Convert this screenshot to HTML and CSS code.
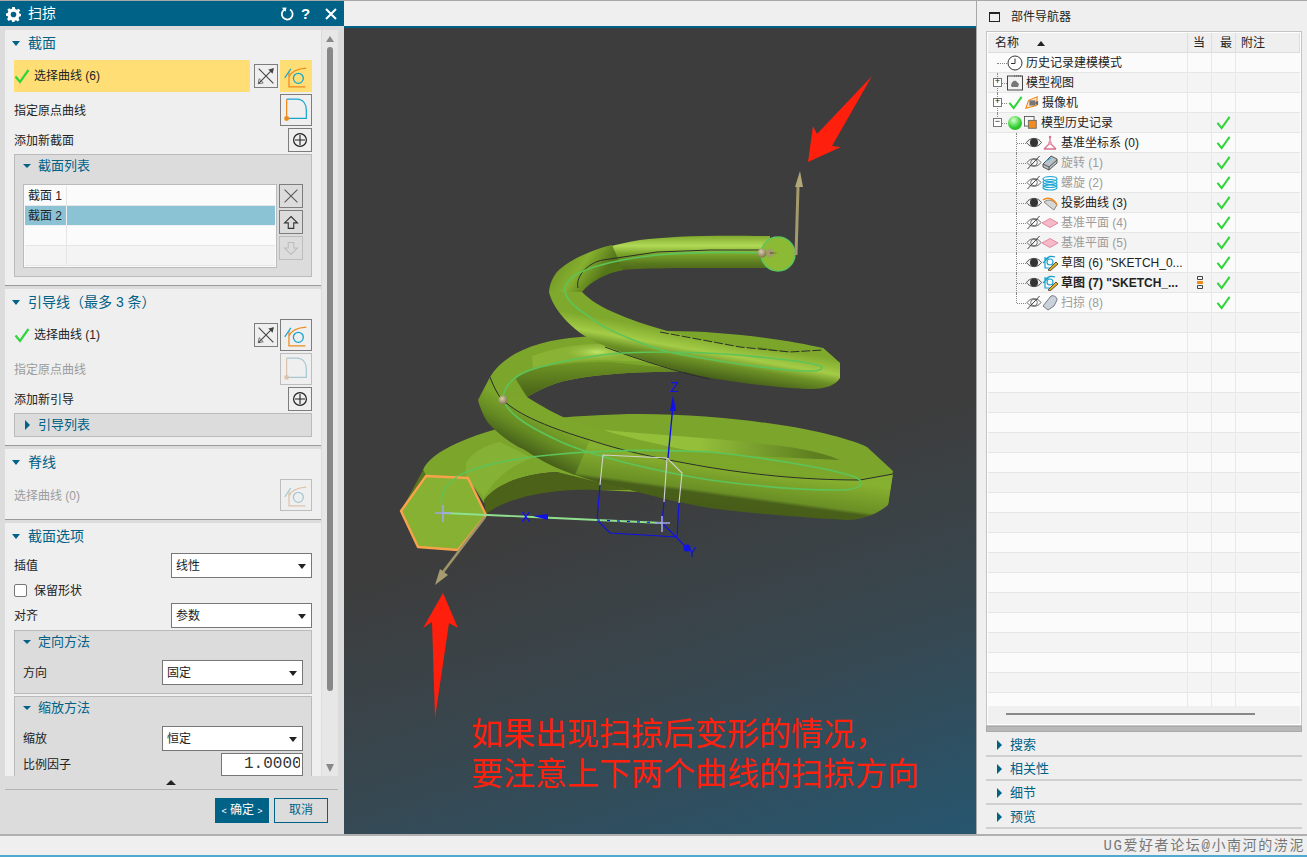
FILE: index.html
```html
<!DOCTYPE html>
<html lang="zh-CN">
<head>
<meta charset="utf-8">
<title>扫掠</title>
<link rel="stylesheet" href="styles.css">
</head>
<body>
<svg class="defs" aria-hidden="true">
  <symbol id="i-check" viewBox="0 0 16 16"><path d="M1.5 8.5 L6 14 L14.5 2" fill="none" stroke="#2fd53a" stroke-width="2.2"/></symbol>
  <symbol id="i-expand" viewBox="0 0 24 24"><path d="M4 4 L20 20 M20 4 L4 20" fill="none" stroke="#444" stroke-width="1.2"/><path d="M20.5 3.5 L14.5 4.8 L19.2 9.5 Z" fill="#444"/><path d="M3.5 20.5 L9 19.4 L4.6 15 Z" fill="none" stroke="#444" stroke-width=".8"/></symbol>
  <symbol id="i-curve" viewBox="0 0 32 32"><path d="M8.5 12 V27.5 H26 M8.5 17 C11 11 18 8 27 7.5" fill="none" stroke="#ee8a1c" stroke-width="1.3"/><path d="M4 18 L10.5 8.5" stroke="#18a6d0" stroke-width="1.3"/><circle cx="18.5" cy="18.5" r="5.3" fill="none" stroke="#18a6d0" stroke-width="1.4"/></symbol>
  <symbol id="i-origin" viewBox="0 0 32 32"><path d="M6 25 V4.5" stroke="#ee8a1c" stroke-width="1.3"/><path d="M6 4.5 H17 C24 4.5 27 10 27 16 V25 H7" fill="none" stroke="#18a6d0" stroke-width="1.3"/><circle cx="6" cy="25" r="2.6" fill="#ee8a1c"/></symbol>
  <symbol id="i-plus" viewBox="0 0 24 24"><circle cx="12" cy="12" r="7" fill="none" stroke="#222" stroke-width="1.3"/><path d="M12 6.5 V17.5 M6.5 12 H17.5" stroke="#222" stroke-width="1.2"/></symbol>
  <symbol id="i-x" viewBox="0 0 24 24"><path d="M5 5 L19 19 M19 5 L5 19" stroke="#555" stroke-width="1.1"/></symbol>
  <symbol id="i-up" viewBox="0 0 24 24"><path d="M12 6 L19 13 H15 V19 H9 V13 H5 Z" fill="none" stroke="#333" stroke-width="1.2"/></symbol>
  <symbol id="i-down" viewBox="0 0 24 24"><path d="M12 19 L19 12 H15 V6 H9 V12 H5 Z" fill="none" stroke="#999" stroke-width="1.2"/></symbol>
  <symbol id="i-clock" viewBox="0 0 16 16"><circle cx="8" cy="8" r="7" fill="#fff" stroke="#333"/><path d="M8 3.5 V8.5 H4" fill="none" stroke="#333"/></symbol>
  <symbol id="i-view" viewBox="0 0 16 16"><rect x=".5" y="1" width="15" height="14" fill="#f2f2f2" stroke="#444"/><path d="M7 1 H15" stroke="#444" stroke-dasharray="1 1"/><path d="M4 11 C4 7 7 5 9 6 L12 9 L11 12 H5 Z" fill="#777"/></symbol>
  <symbol id="i-camera" viewBox="0 0 16 16"><path d="M1 14 L4 5 L14 1 L13 11 Z" fill="#f8e6cf" stroke="#ef8a1d" stroke-width="1.2"/><rect x="5" y="5" width="7" height="6" fill="#777"/><path d="M12 7 L15 5.5 V10.5 L12 9 Z" fill="#666"/></symbol>
  <symbol id="i-hist" viewBox="0 0 16 16"><rect x=".5" y=".5" width="11" height="11" fill="#f6f6f6" stroke="#555"/><rect x="5" y="5" width="9" height="9" fill="#f28c1e" stroke="#666"/></symbol>
  <symbol id="i-csys" viewBox="0 0 16 16"><path d="M8 8 V2 M8 8 L2 14 M8 8 L14 14 M2 14 H14" fill="none" stroke="#d9708c" stroke-width="1.3"/><circle cx="8" cy="8" r="2" fill="#e6a0b2"/><circle cx="8" cy="2" r="1.2" fill="#d9708c"/></symbol>
  <symbol id="i-rev" viewBox="0 0 16 16"><path d="M1 9 L9 1 L15 4 L15 8 L7 15 L1 12 Z" fill="#b8c2c8" stroke="#555"/><path d="M1 9 L7 12 L15 5 M7 12 V15" fill="none" stroke="#555"/><path d="M4 6 L9 3" stroke="#2aa3cc"/></symbol>
  <symbol id="i-helix" viewBox="0 0 16 16"><g fill="none" stroke="#1ea7d6" stroke-width="1.2"><ellipse cx="8" cy="4" rx="7" ry="2.5"/><ellipse cx="8" cy="7" rx="7" ry="2.5"/><ellipse cx="8" cy="10" rx="7" ry="2.5"/><ellipse cx="8" cy="12.5" rx="7" ry="2.5"/></g></symbol>
  <symbol id="i-proj" viewBox="0 0 16 16"><path d="M2 7 L8 12 L12 15 L15 10 C12 6 7 3 2 7 Z" fill="#d6d6d6" stroke="#888"/><path d="M1 5 C6 1 12 4 15 10" fill="none" stroke="#ef8a1d" stroke-width="1.5"/></symbol>
  <symbol id="i-plane" viewBox="0 0 16 16"><path d="M0 8 L8 3.5 L16 8 L8 12.5 Z" fill="#f6b9c8" stroke="#e08aa2"/></symbol>
  <symbol id="i-sketch" viewBox="0 0 16 16"><path d="M1 8 L8 1 M3 2 V13 H9 M3 5 C6 1 10 1 13 2" fill="none" stroke="#16a3d2" stroke-width="1.2"/><circle cx="8" cy="7" r="3" fill="none" stroke="#16a3d2" stroke-width="1.1"/><path d="M6 15 L14 7 L16 9 L8 16 Z" fill="#e5b01f" stroke="#333" stroke-width=".8"/></symbol>
  <symbol id="i-sweep" viewBox="0 0 16 16"><path d="M1 11 L9 1 C12 0 15 2 15 5 L12 11 L6 15 Z" fill="#c9d2d8" stroke="#778"/></symbol>
  <symbol id="i-eye" viewBox="0 0 16 12"><path d="M.5 6 C4 .5 12 .5 15.5 6 C12 11.5 4 11.5 .5 6 Z" fill="#eee" stroke="#555"/><circle cx="8" cy="6" r="4" fill="#333"/></symbol>
  <symbol id="i-eyeoff" viewBox="0 0 16 14"><path d="M.5 7 C4 1.5 12 1.5 15.5 7 C12 12.5 4 12.5 .5 7 Z" fill="none" stroke="#666"/><circle cx="8" cy="7" r="3.6" fill="none" stroke="#666"/><path d="M1 14 L14 0" stroke="#333"/></symbol>
</svg>

<div class="app">
  <div class="main">
    <aside class="dlg">
      <header class="dlg-title">
        <svg class="gear" viewBox="0 0 16 16"><path d="M6.6 0 H9.4 L9.8 2.2 L11.6 3 L13.5 1.8 L15.2 3.7 L13.8 5.4 L14.4 7 L16 7.5 V9.8 L14.2 10.2 L13.4 12 L14.4 13.8 L12.4 15.4 L10.8 14 L9.2 14.6 L8.9 16 H6.6 L6.3 14.4 L4.6 13.8 L2.8 14.8 L1.1 12.9 L2.3 11.2 L1.7 9.6 L0 9.2 V6.8 L1.8 6.3 L2.5 4.6 L1.4 2.9 L3.4 1.2 L5 2.3 L6.3 1.8 Z M8 5 A3 3 0 1 0 8 11 A3 3 0 1 0 8 5 Z" fill="#fff" fill-rule="evenodd"/></svg>
        <span class="dlg-name">扫掠</span>
        <svg class="tbtn tbtn-r" viewBox="0 0 14 14"><path d="M5 2.2 A5.4 5.4 0 1 0 10 2.5" fill="none" stroke="#fff" stroke-width="1.8"/><path d="M1.8 .8 L6.4 .6 L5.6 4.8 Z" fill="#fff"/></svg>
        <span class="tq">?</span>
        <svg class="tbtn" viewBox="0 0 14 14"><path d="M2 2 L12 12 M12 2 L2 12" stroke="#fff" stroke-width="2"/></svg>
      </header>
      <div class="dlg-body">
        <div class="pane">
          <section class="sec">
            <h3 class="sec-h"><i class="tri"></i>截面</h3>
            <div class="row r32">
              <div class="sel on"><svg class="chk"><use href="#i-check"/></svg>选择曲线 (6)</div>
              <button class="btn b24"><svg><use href="#i-expand"/></svg></button>
              <button class="btn b32 yellow"><svg><use href="#i-curve"/></svg></button>
            </div>
            <div class="row r32 mt2"><span class="lbl">指定原点曲线</span><button class="btn b32"><svg><use href="#i-origin"/></svg></button></div>
            <div class="row r24 mt2"><span class="lbl">添加新截面</span><button class="btn b24"><svg><use href="#i-plus"/></svg></button></div>
            <div class="grp list-grp">
              <h4 class="grp-h"><i class="tri sm"></i>截面列表</h4>
              <div class="list-wrap">
                <div class="list">
                  <div class="li"><span>截面 1</span></div>
                  <div class="li cur"><span>截面 2</span></div>
                  <div class="li"><span></span></div>
                  <div class="li alt"><span></span></div>
                </div>
                <div class="side">
                  <button class="btn b24"><svg><use href="#i-x"/></svg></button>
                  <button class="btn b24"><svg><use href="#i-up"/></svg></button>
                  <button class="btn b24 off"><svg><use href="#i-down"/></svg></button>
                </div>
              </div>
            </div>
          </section>
          <section class="sec">
            <h3 class="sec-h"><i class="tri"></i>引导线（最多 3 条）</h3>
            <div class="row r32">
              <div class="sel"><svg class="chk"><use href="#i-check"/></svg>选择曲线 (1)</div>
              <button class="btn b24"><svg><use href="#i-expand"/></svg></button>
              <button class="btn b32"><svg><use href="#i-curve"/></svg></button>
            </div>
            <div class="row r32 mt2"><span class="lbl dim">指定原点曲线</span><button class="btn b32 off"><svg><use href="#i-origin"/></svg></button></div>
            <div class="row r24 mt2"><span class="lbl">添加新引导</span><button class="btn b24"><svg><use href="#i-plus"/></svg></button></div>
            <div class="grp closed"><h4 class="grp-h"><i class="tri-r"></i>引导列表</h4></div>
          </section>
          <section class="sec">
            <h3 class="sec-h"><i class="tri"></i>脊线</h3>
            <div class="row r32"><span class="lbl dim">选择曲线 (0)</span><button class="btn b32 off"><svg><use href="#i-curve"/></svg></button></div>
          </section>
          <section class="sec last">
            <h3 class="sec-h"><i class="tri"></i>截面选项</h3>
            <div class="row r25"><span class="lbl">插值</span><div class="dd">线性</div></div>
            <div class="row r25"><label class="cb"><i class="box"></i><span class="lbl">保留形状</span></label></div>
            <div class="row r25"><span class="lbl">对齐</span><div class="dd">参数</div></div>
            <div class="grp g2">
              <h4 class="grp-h"><i class="tri sm"></i>定向方法</h4>
              <div class="row r25 in mt8"><span class="lbl">方向</span><div class="dd">固定</div></div>
            </div>
            <div class="grp g2 g3">
              <h4 class="grp-h"><i class="tri sm"></i>缩放方法</h4>
              <div class="row r25 in mt8"><span class="lbl">缩放</span><div class="dd">恒定</div></div>
              <div class="row in mt2"><span class="lbl">比例因子</span><div class="num"><span>1.00000</span></div></div>
            </div>
          </section>
        </div>
        <div class="sb"><i class="sb-up"></i><i class="sb-thumb"></i><i class="sb-dn"></i></div>
      </div>
      <div class="dlg-more"><i class="more"></i></div>
      <footer class="dlg-foot">
        <button class="ok"><small>&lt;</small> 确定 <small>&gt;</small></button>
        <button class="cancel">取消</button>
      </footer>
    </aside>

    <main class="view">
      <div class="view-top"></div>
      <div class="canvas">
        <svg class="scene" viewBox="344 28 632 806" preserveAspectRatio="none">
          <defs>
            <linearGradient id="gDepr" gradientUnits="userSpaceOnUse" x1="700" y1="0" x2="815" y2="0"><stop offset="0" stop-color="#93bf3a"/><stop offset="1" stop-color="#5e7e20"/></linearGradient>
            <linearGradient id="gSide" gradientUnits="userSpaceOnUse" x1="700" y1="462" x2="694" y2="506"><stop offset="0" stop-color="#86b02f"/><stop offset=".62" stop-color="#6a8f25"/><stop offset=".7" stop-color="#49601a"/><stop offset="1" stop-color="#465c18"/></linearGradient>
            <linearGradient id="gSideL" gradientUnits="userSpaceOnUse" x1="512" y1="403" x2="495" y2="435"><stop offset="0" stop-color="#7aa42a"/><stop offset=".5" stop-color="#648a22"/><stop offset="1" stop-color="#47601a"/></linearGradient>
            <linearGradient id="gWall" gradientUnits="userSpaceOnUse" x1="0" y1="362" x2="0" y2="392"><stop offset="0" stop-color="#6f9524"/><stop offset="1" stop-color="#4d6819"/></linearGradient>
            <linearGradient id="gD" gradientUnits="userSpaceOnUse" x1="660" y1="328" x2="653" y2="368"><stop offset="0" stop-color="#7fa92c"/><stop offset=".38" stop-color="#a4cc47"/><stop offset=".62" stop-color="#6d9226"/><stop offset="1" stop-color="#465f19"/></linearGradient>
            <linearGradient id="gE" gradientUnits="userSpaceOnUse" x1="0" y1="235" x2="0" y2="271"><stop offset="0" stop-color="#7ca62b"/><stop offset=".3" stop-color="#b2da58"/><stop offset=".52" stop-color="#7ca62b"/><stop offset=".78" stop-color="#5a7a1f"/><stop offset="1" stop-color="#4c6219"/></linearGradient>
            <linearGradient id="gEL" gradientUnits="userSpaceOnUse" x1="552" y1="262" x2="592" y2="290"><stop offset="0" stop-color="#6c9226"/><stop offset=".55" stop-color="#86b02f"/><stop offset="1" stop-color="#557519"/></linearGradient>
            <radialGradient id="gBall" cx=".4" cy=".35" r=".7"><stop offset="0" stop-color="#d9cfa8"/><stop offset="1" stop-color="#7b6f4c"/></radialGradient>
            <radialGradient id="gSpot"><stop offset="0" stop-color="#c3e868"/><stop offset="1" stop-color="#9dc546" stop-opacity="0"/></radialGradient>
          </defs>

          <!-- lower back band -->
          <path d="M423 470 C430 452 470 433 530 421 C570 416 610 414 640 414 C740 415 830 430 867 447 L893 471 L888 505 L600 490 L557 472 C520 474 495 485 484 503 L468 478 L426 476 Z" fill="#7ca62b"/>
          <path d="M401 511 L423 470 L426 476 Z" fill="#56751d"/>
          <path d="M484 500 C495 485 520 474 557 472 L630 490 L597 490 C560 488 510 495 486 514 Z" fill="#4c6219"/>
          <path d="M466 478 L466 463 C472 452 486 445 500 442 L532 458 C512 465 495 478 484 497 Z" fill="#85b134"/>
          <path d="M603 430 C660 435 710 438 757 443 C790 447 815 450 840 460 L773 457 C730 454 680 451 640 448 Z" fill="url(#gDepr)"/>

          <!-- front ribbon 1 -->
          <path d="M527 397 C540 405 550 411 563 417 C575 422 590 427 603 430 C650 445 760 465 860 480 L640 460 L590 440 L523 417 L500 397 Z" fill="#7da72b"/>
          <path d="M500 397 C510 408 530 422 590 440 C620 450 650 457 707 467 C750 474 800 480 860 480 L893 474 L888 505 C880 512 865 520 847 520 C790 517 740 512 710 508 C690 505 660 498 630 490 C610 486 580 478 557 468 Z" fill="url(#gSide)"/>
          <path d="M478 400 L490 377 C493 385 497 393 500 397 C510 408 530 422 590 440 L575 475 L557 468 C550 465 540 460 523 449 C510 443 500 435 490 425 C485 420 480 408 478 400 Z" fill="url(#gSideL)"/>

          <!-- middle back band -->
          <path d="M490 377 C505 352 540 340 580 337 L660 331 C720 330 790 340 823 348 L840 363 L838 380 L710 372 C660 370 590 373 557 383 C545 387 535 392 527 397 L500 397 C497 392 493 385 490 377 Z" fill="#7ca62b"/>
          <path d="M515 378 C525 368 560 362 610 362 L710 372 C660 370 590 373 557 383 C545 387 535 392 527 397 Z" fill="url(#gWall)"/>
          <path d="M532 356 C560 346 590 342 610 345 L650 362 L600 360 C570 361 550 363 533 368 Z" fill="#8ab234"/>
          <ellipse cx="597" cy="352" rx="32" ry="8" fill="url(#gSpot)"/>
          <path d="M757 347 L790 352 L823 366 L780 360 Z" fill="#5f7f20"/>

          <!-- top band -->
          <path d="M549 292 C550 283 553 277 557 272 C570 258 600 247 640 240 C670 236 710 235 770 236 L770 268 L710 268 C680 268 650 268 623 270 C605 273 590 282 582 292 Z" fill="url(#gE)"/>
          <path d="M549 292 C550 283 553 277 557 272 C568 261 590 250 612 245 L623 270 C605 273 590 282 582 292 Z" fill="url(#gEL)"/>
          <!-- front ribbon 2 -->
          <path d="M549 292 C553 310 575 335 603 345 C640 360 680 372 710 378 C745 384 790 389 813 389 C825 389 836 385 840 378 L840 363 L823 348 L790 352 L740 347 C700 340 650 328 620 315 C600 307 590 300 582 292 Z" fill="url(#gD)"/>

          <!-- ridge lines -->
          <g fill="none" stroke="#2c2f28" stroke-width="1">
            <path d="M578 288 C575 275 590 262 603 260 L657 252 L710 250 L770 250"/>
            <path d="M660 332 L740 347 L790 352 L823 350" stroke-dasharray="9 2"/>
            <path d="M605 347 C640 360 680 373 710 379"/>
            <path d="M490 377 C493 385 497 393 500 397 C510 408 530 422 590 440 C620 450 650 457 707 467 C750 474 800 480 860 480 L893 474"/>
          </g>
          <!-- guide curve -->
          <path d="M443 512 C438 497 445 485 457 477 C470 468 510 458 550 455 C590 451 650 449 710 452 C760 457 830 468 855 477 C868 483 860 490 840 490 C800 490 760 487 710 480 C660 472 590 456 557 440 C525 425 505 412 503 397 C505 385 515 377 523 373 C540 365 590 355 623 353 C660 351 700 352 740 355 C780 359 815 362 822 367 C822 372 810 371 800 371 C760 368 700 358 673 353 C650 348 600 328 590 317 C570 305 560 293 567 283 C575 270 610 260 657 255 C690 252 730 252 766 253" fill="none" stroke="#5cc45a" stroke-width="1.6"/>

          <!-- wire box -->
          <g fill="none" stroke-width="1.1">
            <path d="M600 485 L603 455 L667 458 L682 473 L679 503 M667 458 L664 502" stroke="#d2d2d2"/>
            <path d="M600 485 L597 520 L610 533 L677 537 L679 503 M664 502 L662 523 L676 537 M676 537 L687 548" stroke="#1010e8"/>
            <path d="M668 458 L673 405" stroke="#1010e8" stroke-width="1.4"/>
          </g>

          <!-- end cap -->
          <circle cx="778" cy="254" r="17" fill="#8cba35" stroke="#5ec55e" stroke-width="1.4"/>
          <!-- start profile -->
          <path d="M426 476 L468 478 L486 515 L458 550 L418 547 L401 511 Z" fill="#87b133" stroke="#f8a24c" stroke-width="2.4" stroke-linejoin="round"/>
          <path d="M443 513 C438 497 445 485 457 477" fill="none" stroke="#5cc45a" stroke-width="1.4"/>

          <!-- axes -->
          <path d="M443 513 L533 517 L597 520 L663 523" fill="none" stroke="#8fe08f" stroke-width="1.8"/>
          <path d="M597 520 L663 523" fill="none" stroke="#1010e8" stroke-width="1.2" stroke-dasharray="3 7"/>
          <path d="M533 516 L548 514 L548 520 Z" fill="#1010e8"/>
          <path d="M673 395 L676 411 L670 411 Z" fill="#1010e8"/>
          <circle cx="687" cy="548" r="3.5" fill="#1010e8"/>
          <g class="axis"><text x="521" y="522">X</text><text x="670" y="392">Z</text><text x="687" y="557">Y</text></g>
          <path d="M435 513 H451 M443 505 V522 M655 523 H670 M662 516 V532" stroke="#a3a3e6" stroke-width="1.6"/>

          <!-- direction arrows -->
          <path d="M485 517 L443 572" stroke="#9d9468" stroke-width="2.6"/>
          <path d="M435 585 L440 569 L448 575 Z" fill="#a69c70"/>
          <path d="M796 255 L798 187" stroke="#a39a6d" stroke-width="3"/>
          <path d="M800 171 L803 187 L795 187 Z" fill="#b1a77a"/>
          <circle cx="770" cy="253" r="4" fill="#a39a6d"/>
          <path d="M770 252 L778 253 L770 254 Z" fill="#6f6642"/>
          <circle cx="762" cy="253" r="4.5" fill="url(#gBall)"/>
          <circle cx="503" cy="400" r="4.5" fill="url(#gBall)"/>

          <!-- annotation arrows -->
          <path d="M872 76 L817 134 L813 126 L808 162 L841 147 L832 146 Z" fill="#fe1f0d"/>
          <path d="M443 593 L458 628 L449 623 L435 718 L432 622 L423 628 Z" fill="#fe1f0d"/>
        </svg>
        <p class="note">如果出现扫掠后变形的情况，<br>要注意上下两个曲线的扫掠方向</p>
      </div>
    </main>

    <aside class="nav">
      <div class="nav-h"><i class="nav-ic"></i>部件导航器</div>
      <div class="tbl">
        <div class="thead">
          <div class="th c0">名称<i class="sort"></i></div>
          <div class="th c1">当</div>
          <div class="th c2">最</div>
          <div class="th c3">附注</div>
        </div>
        <div class="tbody">
          <div class="tr"><div class="c0 nm"><span class="stem s0 first"></span><svg class="ic16"><use href="#i-clock"/></svg><span class="t t1">历史记录建模模式</span></div><div class="c1"></div><div class="c2"></div><div class="c3"></div></div>
          <div class="tr"><div class="c0 nm"><span class="stem s0"><b class="exp">+</b></span><svg class="ic16"><use href="#i-view"/></svg><span class="t t1">模型视图</span></div><div class="c1"></div><div class="c2"></div><div class="c3"></div></div>
          <div class="tr"><div class="c0 nm"><span class="stem s0"><b class="exp">+</b></span><svg class="ic15"><use href="#i-check"/></svg><svg class="ic14"><use href="#i-camera"/></svg><span class="t t2">摄像机</span></div><div class="c1"></div><div class="c2"></div><div class="c3"></div></div>
          <div class="tr"><div class="c0 nm"><span class="stem s0 lastst"><b class="exp">−</b></span><i class="ball"></i><svg class="ic14"><use href="#i-hist"/></svg><span class="t t2">模型历史记录</span></div><div class="c1"></div><div class="c2"><svg class="ok15"><use href="#i-check"/></svg></div><div class="c3"></div></div>

          <div class="tr"><div class="c0 nm"><span class="stem s1"></span><svg class="eye"><use href="#i-eye"/></svg><svg class="ic16 m1"><use href="#i-csys"/></svg><span class="t t3">基准坐标系 (0)</span></div><div class="c1"></div><div class="c2"><svg class="ok15"><use href="#i-check"/></svg></div><div class="c3"></div></div>
          <div class="tr"><div class="c0 nm"><span class="stem s1"></span><svg class="eye"><use href="#i-eyeoff"/></svg><svg class="ic16 m1"><use href="#i-rev"/></svg><span class="t t3 dim">旋转 (1)</span></div><div class="c1"></div><div class="c2"><svg class="ok15"><use href="#i-check"/></svg></div><div class="c3"></div></div>
          <div class="tr"><div class="c0 nm"><span class="stem s1"></span><svg class="eye"><use href="#i-eyeoff"/></svg><svg class="ic16 m1"><use href="#i-helix"/></svg><span class="t t3 dim">螺旋 (2)</span></div><div class="c1"></div><div class="c2"><svg class="ok15"><use href="#i-check"/></svg></div><div class="c3"></div></div>
          <div class="tr"><div class="c0 nm"><span class="stem s1"></span><svg class="eye"><use href="#i-eye"/></svg><svg class="ic16 m1"><use href="#i-proj"/></svg><span class="t t3">投影曲线 (3)</span></div><div class="c1"></div><div class="c2"><svg class="ok15"><use href="#i-check"/></svg></div><div class="c3"></div></div>
          <div class="tr"><div class="c0 nm"><span class="stem s1"></span><svg class="eye"><use href="#i-eyeoff"/></svg><svg class="ic16 m1"><use href="#i-plane"/></svg><span class="t t3 dim">基准平面 (4)</span></div><div class="c1"></div><div class="c2"><svg class="ok15"><use href="#i-check"/></svg></div><div class="c3"></div></div>
          <div class="tr"><div class="c0 nm"><span class="stem s1"></span><svg class="eye"><use href="#i-eyeoff"/></svg><svg class="ic16 m1"><use href="#i-plane"/></svg><span class="t t3 dim">基准平面 (5)</span></div><div class="c1"></div><div class="c2"><svg class="ok15"><use href="#i-check"/></svg></div><div class="c3"></div></div>
          <div class="tr"><div class="c0 nm"><span class="stem s1"></span><svg class="eye"><use href="#i-eye"/></svg><svg class="ic16 m1"><use href="#i-sketch"/></svg><span class="t t3">草图 (6) "SKETCH_0...</span></div><div class="c1"></div><div class="c2"><svg class="ok15"><use href="#i-check"/></svg></div><div class="c3"></div></div>
          <div class="tr"><div class="c0 nm"><span class="stem s1"></span><svg class="eye"><use href="#i-eye"/></svg><svg class="ic16 m1"><use href="#i-sketch"/></svg><span class="t t3 bold">草图 (7) "SKETCH_...</span></div><div class="c1 flow"><svg class="flow-ic" viewBox="0 0 8 13"><path d="M1.5 .5 H6.5 V3.5 H1.5 Z M1.5 9.5 H6.5 V12.5 H1.5 Z" fill="none" stroke="#444"/><rect x="1" y="5" width="6" height="3" fill="#ef8a1d"/></svg></div><div class="c2"><svg class="ok15"><use href="#i-check"/></svg></div><div class="c3"></div></div>
          <div class="tr"><div class="c0 nm"><span class="stem s1 endst"></span><svg class="eye"><use href="#i-eyeoff"/></svg><svg class="ic16 m1"><use href="#i-sweep"/></svg><span class="t t3 dim">扫掠 (8)</span></div><div class="c1"></div><div class="c2"><svg class="ok15"><use href="#i-check"/></svg></div><div class="c3"></div></div>

          <div class="tr"><i class="c0"></i><i class="c1"></i><i class="c2"></i><i class="c3"></i></div>
          <div class="tr"><i class="c0"></i><i class="c1"></i><i class="c2"></i><i class="c3"></i></div>
          <div class="tr"><i class="c0"></i><i class="c1"></i><i class="c2"></i><i class="c3"></i></div>
          <div class="tr"><i class="c0"></i><i class="c1"></i><i class="c2"></i><i class="c3"></i></div>
          <div class="tr"><i class="c0"></i><i class="c1"></i><i class="c2"></i><i class="c3"></i></div>
          <div class="tr"><i class="c0"></i><i class="c1"></i><i class="c2"></i><i class="c3"></i></div>
          <div class="tr"><i class="c0"></i><i class="c1"></i><i class="c2"></i><i class="c3"></i></div>
          <div class="tr"><i class="c0"></i><i class="c1"></i><i class="c2"></i><i class="c3"></i></div>
          <div class="tr"><i class="c0"></i><i class="c1"></i><i class="c2"></i><i class="c3"></i></div>
          <div class="tr"><i class="c0"></i><i class="c1"></i><i class="c2"></i><i class="c3"></i></div>
          <div class="tr"><i class="c0"></i><i class="c1"></i><i class="c2"></i><i class="c3"></i></div>
          <div class="tr"><i class="c0"></i><i class="c1"></i><i class="c2"></i><i class="c3"></i></div>
          <div class="tr"><i class="c0"></i><i class="c1"></i><i class="c2"></i><i class="c3"></i></div>
          <div class="tr"><i class="c0"></i><i class="c1"></i><i class="c2"></i><i class="c3"></i></div>
          <div class="tr"><i class="c0"></i><i class="c1"></i><i class="c2"></i><i class="c3"></i></div>
          <div class="tr"><i class="c0"></i><i class="c1"></i><i class="c2"></i><i class="c3"></i></div>
          <div class="tr"><i class="c0"></i><i class="c1"></i><i class="c2"></i><i class="c3"></i></div>
          <div class="tr"><i class="c0"></i><i class="c1"></i><i class="c2"></i><i class="c3"></i></div>
          <div class="tr"><i class="c0"></i><i class="c1"></i><i class="c2"></i><i class="c3"></i></div>
          <div class="tr"><i class="c0"></i><i class="c1"></i><i class="c2"></i><i class="c3"></i></div>
          <div class="tr"><i class="c0"></i><i class="c1"></i><i class="c2"></i><i class="c3"></i></div>
        </div>
        <div class="hscroll"><i class="hthumb"></i></div>
      </div>
      <div class="splitter"></div>
      <div class="acc"><i class="tri-r"></i>搜索</div>
      <div class="acc"><i class="tri-r"></i>相关性</div>
      <div class="acc"><i class="tri-r"></i>细节</div>
      <div class="acc"><i class="tri-r"></i>预览</div>
    </aside>
  </div>
  <div class="status">UG爱好者论坛@小南河的涝泥</div>
</div>
</body>
</html>
```

FILE: styles.css
```css
* { box-sizing: border-box; }
html, body { margin: 0; height: 100%; overflow: hidden; }
body {
  font: 12px/1.2 "Liberation Sans", "Noto Sans CJK SC", sans-serif;
  color: #222;
  background: #efefef;
}
i, b { font-style: normal; font-weight: normal; display: block; }
h3, h4, p { margin: 0; }
button { font: inherit; padding: 0; }
small { font-size: 9px; }
.defs { display: none; }

.app { width: 1307px; height: 857px; display: flex; flex-direction: column; }
.main { height: 834px; display: flex; flex: none; }

/* ---------- dialog ---------- */
.dlg { width: 344px; flex: none; background: #dcdcdc; display: flex; flex-direction: column; }
.dlg-title {
  height: 26px; flex: none; background: #006287; border-top: 1px solid #a8a8a8;
  display: flex; align-items: center; color: #fff; padding-left: 6px;
}
.gear { width: 15px; height: 15px; margin-top: 1px; }
.dlg-name { font-size: 14px; margin-left: 7px; flex: 1; margin-top: -1px; }
.tbtn { width: 14px; height: 14px; display: block; margin-right: 6px; }
.tbtn-r { margin-right: 7px; }
.tq { font: bold 15px "Liberation Sans", sans-serif; width: 10px; margin-right: 13px; }

.dlg-body { height: 746px; margin-top: 4px; padding-left: 5px; display: flex; flex: none; }
.pane { width: 316px; height: 746px; overflow: hidden; background: #efefef; flex: none; }

.sec { padding-bottom: 8px; }
.sec + .sec { border-top: 1px solid #999; padding-top: 3px; background: linear-gradient(#dcdcdc, #dcdcdc) no-repeat 0 0 / 100% 3px; }
.sec.last { padding-bottom: 0; }
.sec-h {
  height: 26px; display: flex; align-items: center; padding-left: 7px; gap: 8px;
  font-size: 14px; font-weight: normal; color: #006287;
}
.tri { width: 0; height: 0; border: 4.5px solid transparent; border-top: 5px solid #006287; border-bottom: 0; }
.tri.sm { border-width: 4px 4px 0; border-top-color: #006287; border-left-color: transparent; border-right-color: transparent; }
.tri-r { width: 0; height: 0; border: 5px solid transparent; border-left: 5px solid #006287; border-right: 0; flex: none; }

.row { display: flex; align-items: center; padding: 0 9px; justify-content: space-between; }
.sec-h + .row { margin-top: 4px; }
.r32 { height: 32px; }
.r24 { height: 24px; }
.r25 { height: 25px; }
.mt2 { margin-top: 2px; }
.mt8 { margin-top: 8px; }
.lbl { line-height: 1; margin-top: 1px; }
.dim { color: #9c9c9c; }

.sel { width: 236px; height: 32px; display: flex; align-items: center; margin-right: 4px; flex: none; gap: 4px; }
.sel.on { background: #ffde76; }
.sel + .btn { margin-right: 2px; }
.chk { width: 16px; height: 16px; }

.btn { display: block; background: transparent; border: 1px solid #7d7d7d; flex: none; }
.btn svg { display: block; width: 100%; height: 100%; }
.b24 { width: 24px; height: 24px; }
.b32 { width: 32px; height: 32px; }
.yellow { background: #ffde76; border-color: #ffde76; }
.btn.off { border-color: #bdbdbd; }
.btn.off svg { opacity: .45; filter: grayscale(.5); }

.grp { margin: 2px 9px 0; border: 1px solid #bbb; background: #dcdcdc; }
.grp-h { height: 21px; display: flex; align-items: center; padding-left: 8px; gap: 7px; font-size: 13px; font-weight: normal; color: #006287; }
.list-grp { height: 123px; }
.closed { height: 24px; }
.closed .grp-h { height: 22px; padding-left: 10px; gap: 8px; }
.list-wrap { display: flex; margin: 8px 0 0 8px; gap: 2px; }
.list { width: 254px; height: 84px; border: 1px solid #bbb; background: #fbfbfb; padding: 1px; }
.li { height: 20px; border-bottom: 1px solid #e6e6e6; display: flex; }
.li span { width: 42px; border-right: 1px solid #e6e6e6; padding: 3px 0 0 3px; }
.li.cur { background: #8cc3d4; border-bottom-color: #f2f2f2; }
.li.cur span { border-right-color: #f2f2f2; }
.li.alt { background: #f4f4f4; }
.side { display: flex; flex-direction: column; gap: 2px; }

.dd {
  width: 141px; height: 25px; background: #fff; border: 1px solid #777; display: flex; align-items: center;
  padding: 2px 0 0 4px;
}
.dd::after {
  content: ""; margin-left: auto; margin-right: 5px; margin-top: -1px; width: 0; height: 0;
  border: 4px solid transparent; border-top: 5px solid #222; border-bottom: 0;
}
.cb { display: flex; align-items: center; gap: 7px; }
.box { width: 13px; height: 13px; background: #fff; border: 1px solid #777; border-radius: 2px; }
.g2 { height: 64px; }
.g3 { height: 90px; }
.row.in { padding: 0 8px; }
.num {
  width: 82px; height: 23px; background: #fff; border: 1px solid #777; padding-left: 22px;
  font: 16px/21px "Liberation Mono", monospace; color: #333;
}
.num span { display: block; width: 56px; overflow: hidden; white-space: nowrap; }

.sb { width: 16px; margin-left: 1px; background: #e7e7e7; display: flex; flex-direction: column; align-items: center; }
.sb-up { width: 0; height: 0; margin-top: 6px; border: 4px solid transparent; border-bottom: 6px solid #888; border-top: 0; }
.sb-thumb { width: 6px; height: 644px; margin-top: 5px; background: #888; border-radius: 3px; }
.sb-dn { width: 0; height: 0; margin-top: auto; margin-bottom: 4px; border: 4px solid transparent; border-top: 8px solid #888; border-bottom: 0; }

.dlg-more { height: 14px; margin: 0 6px 0 5px; border-bottom: 1px solid #b5b5b5; display: flex; justify-content: center; padding-top: 4px; padding-right: 1px; flex: none; }
.more { width: 0; height: 0; border: 5px solid transparent; border-bottom: 5px solid #222; border-top: 0; }
.dlg-foot { display: flex; justify-content: flex-end; gap: 5px; padding: 8px 16px 0 0; }
.ok, .cancel { width: 54px; height: 25px; border: 1px solid #006287; }
.ok { background: #006287; color: #fff; }
.cancel { background: transparent; color: #006287; }

/* ---------- graphics window ---------- */
.view { flex: 1; min-width: 0; display: flex; flex-direction: column; }
.view-top { height: 28px; flex: none; background: #efefef; border-top: 1px solid #a8a8a8; border-bottom: 2px solid #006287; }
.canvas {
  height: 806px; position: relative; overflow: hidden;
  background: linear-gradient(163deg, #3d3d3d 0%, #3d3d3d 56%, #38474f 76%, #27566f 100%);
}
.scene { display: block; width: 100%; height: 100%; }
.axis text { font: 14px "Liberation Sans", sans-serif; fill: #1010e8; }
.note {
  position: absolute; left: 127px; top: 683px; white-space: nowrap;
  font: 32px/40px "Noto Sans CJK SC", sans-serif; color: #fe1f0d;
}

/* ---------- part navigator ---------- */
.nav { width: 331px; flex: none; border-left: 1px solid #a8a8a8; border-top: 1px solid #a8a8a8; padding: 0 5px 0 9px; background: #efefef; }
.nav-h { height: 30px; display: flex; align-items: center; padding: 2px 0 0 3px; gap: 11px; }
.nav-ic { width: 11px; height: 10px; border: 1px solid #222; border-top-width: 2px; }
.tbl { height: 695px; border: 2px solid #fff; outline: 1px solid #c4c4c4; outline-offset: -1px; display: flex; flex-direction: column; background: #f0f0f0; }
.thead { display: flex; height: 20px; flex: none; background: #efefef; border-bottom: 1px solid #ddd; }
.th { display: flex; align-items: center; border-right: 1px solid #ddd; height: 19px; padding-top: 1px; }
.th.c0 { padding-left: 7px; gap: 18px; }
.th.c1, .th.c2, .th.c3 { padding-left: 5px; }
.sort { width: 0; height: 0; border: 4.5px solid transparent; border-bottom: 5px solid #222; border-top: 0; }
.c0 { width: 200px; flex: none; }
.c1, .c2 { width: 24px; flex: none; }
.c3 { flex: 1; }
.tbody { flex: 1; overflow: hidden; min-height: 0; }
.tr { display: flex; height: 20px; background: #fbfbfb; border-bottom: 1px solid #e6e6e6; }
.tr:nth-child(even) { background: #f4f4f4; }
.tr > * { border-right: 1px solid #e8e8e8; height: 19px; }
.tr > .c3 { border-right: 0; }
.c2 { display: flex; justify-content: center; align-items: center; }
.ok15 { width: 15px; height: 15px; }
.nm { display: flex; align-items: center; }
.stem { flex: none; width: 10px; height: 100%; border-left: 1px dotted #888; position: relative; align-self: flex-start; }
.stem::before { content: ""; display: block; height: 10px; border-bottom: 1px dotted #888; }
.stem.s0 { margin-left: 9px; height: 20px; }
.stem.s0.first { height: 10px; margin-top: 0; }
.stem.s0.lastst { height: 10px; }
.stem.s1 { margin-left: 28px; height: 20px; }
.stem.s1.endst { height: 10px; }
.exp {
  position: absolute; left: -5px; top: 5px; width: 9px; height: 9px; background: #fff; border: 1px solid #777;
  font: 9px/7px "Liberation Mono", monospace; text-align: center; color: #111;
}
.stem.first { border-left: 0; }
.ic16 { width: 16px; height: 16px; flex: none; }
.ic15 { width: 15px; height: 15px; flex: none; margin-left: 1px; }
.ic14 { width: 14px; height: 14px; flex: none; margin-left: 2px; }
.ball { width: 14px; height: 14px; flex: none; margin-left: 1px; border-radius: 50%; background: radial-gradient(circle at 40% 30%, #d8ffd0, #35d035 55%, #1c9c1c); }
.eye { width: 16px; height: 13px; flex: none; }
.m1 { margin-left: 0; }
.t { white-space: nowrap; margin-top: 2px; }
.t1 { margin-left: 3px; }
.t2 { margin-left: 3px; }
.t3 { margin-left: 3px; }
.bold { font-weight: bold; }
.flow { display: flex; justify-content: center; align-items: center; }
.flow-ic { width: 8px; height: 13px; }
.hscroll { height: 18px; flex: none; background: #f0f0f0; padding: 7px 0 0 18px; }
.hthumb { width: 249px; height: 2px; background: #888; }
.splitter { height: 6px; background: #b8b8b8; border: 1px solid #aaa; margin-bottom: 1px; }
.acc {
  height: 24px; padding: 2px 0 0 11px; display: flex; align-items: center; gap: 8px;
  border-bottom: 2px solid #d0d0d0; color: #006287; font-size: 13px;
}

/* ---------- status ---------- */
.status {
  height: 23px; flex: none; border-top: 2px solid #b0b0b0; border-bottom: 2px solid #4ea8cf; background: #efefef;
  text-align: right; padding: 1px 2px 0 0; color: #777;
  font: 14px/18px "Liberation Mono", "Noto Sans CJK SC", monospace; letter-spacing: 1.6px;
}
```
